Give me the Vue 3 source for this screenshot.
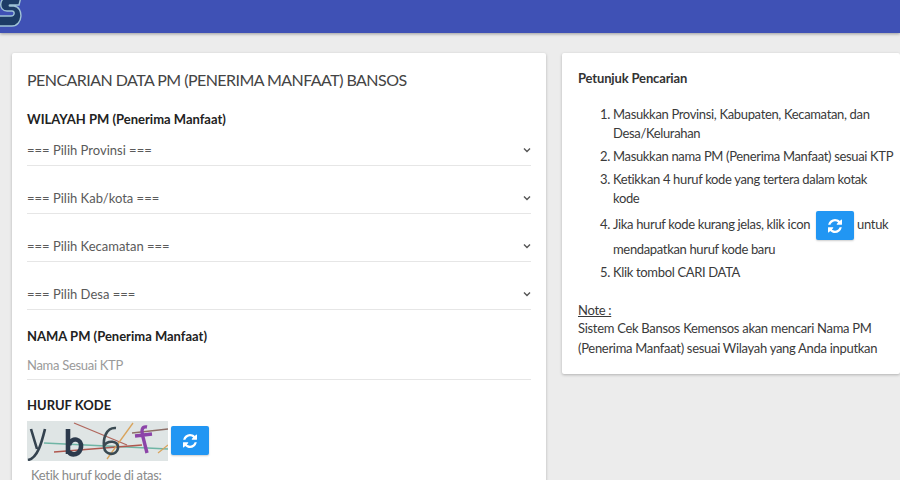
<script setup>
const selects = ['=== Pilih Provinsi ===', '=== Pilih Kab/kota ===', '=== Pilih Kecamatan ===', '=== Pilih Desa ===']
</script>

<template>
  <div class="page">
    <header class="topbar">
      <svg class="logo" width="22" height="27" viewBox="0 0 22 27">
        <path d="M21 -3 H8 C-1 -3 -2 11 7 11 H12 C15 11 15 16 11 16 H-6 V26 H12 C23 26 24 7 14 6 H10 C9 6 9 5 10 5 H19 Z" fill="#1d3c66" stroke="#9fc3d6" stroke-width="1.4" />
      </svg>
    </header>
    <main class="content">
      <section class="card form-card">
        <h1 class="title">PENCARIAN DATA PM (PENERIMA MANFAAT) BANSOS</h1>
        <h2 class="label first">WILAYAH PM (Penerima Manfaat)</h2>
        <div v-for="s in selects" :key="s" class="select">
          <span>{{ s }}</span>
          <svg width="8" height="6" viewBox="0 0 8 6"><path d="M1 1.5 L4 4.5 L7 1.5" fill="none" stroke="#555" stroke-width="1.4" /></svg>
        </div>
        <h2 class="label name">NAMA PM (Penerima Manfaat)</h2>
        <div class="input">Nama Sesuai KTP</div>
        <h2 class="label code">HURUF KODE</h2>
        <div class="captcha-row">
          <div class="captcha">
            <svg width="141" height="40" viewBox="0 0 141 40">
              <rect width="141" height="40" fill="#dfe5e5" />
              <path d="M17 22 L141 28" stroke="#6fb5a5" stroke-width="1.3" fill="none" />
              <path d="M47 2 L100 24" stroke="#b0665c" stroke-width="1.3" fill="none" />
              <path d="M27 31 L115 24" stroke="#b0574e" stroke-width="1.3" fill="none" />
              <path d="M106 2 L80 38" stroke="#d9a45c" stroke-width="1.3" fill="none" />
              <path d="M105 12 L141 8" stroke="#8d6f68" stroke-width="1.3" fill="none" />
              <path d="M131 32 L141 24" stroke="#d9a45c" stroke-width="1.3" fill="none" />
              <path d="M4 8 L10 28 M18 8 C15 20 11 37 1 39" stroke="#34424f" stroke-width="2.6" fill="none" />
              <path d="M41 8 V33 M42 24 C45 15 55 18 54 26 C53 34 45 35 42 31" stroke="#2c3a4c" stroke-width="4.6" fill="none" />
              <path d="M89 7 C79 6 76 18 77 26 C78 35 90 35 91 27 C92 19 80 19 77 25" stroke="#3a4a52" stroke-width="2.6" fill="none" />
              <path d="M120 6 C115 5 114 9 116 16 L120 32 M108 15 L125 13" stroke="#8c44a8" stroke-width="3.4" fill="none" />
            </svg>
          </div>
          <span class="btn">
            <svg width="14" height="14" viewBox="0 0 1536 1536"><path fill="#fff" d="M1511 928q0 5-1 7-64 268-268 434.500T764 1536q-146 0-282.500-55T238 1324l-129 129q-19 19-45 19t-45-19-19-45V960q0-26 19-45t45-19h448q26 0 45 19t19 45-19 45l-137 137q71 66 161 102t187 36q134 0 250-65t186-179q11-17 53-117 8-23 30-23h192q13 0 22.500 9.500t9.500 22.500zm25-800v448q0 26-19 45t-45 19h-448q-26 0-45-19t-19-45 19-45l138-138q-148-137-349-137-134 0-250 65T332 500q-11 17-53 117-8 23-30 23H50q-13 0-22.500-9.500T18 608v-7q65-268 270-434.500T768 0q146 0 284 55.500T1297 212l130-129q19-19 45-19t45 19 19 45z"/></svg>
          </span>
        </div>
        <div class="hint">Ketik huruf kode di atas:</div>
      </section>
      <aside class="card help-card">
        <h3 class="help-title">Petunjuk Pencarian</h3>
        <ol class="steps">
          <li>Masukkan Provinsi, Kabupaten, Kecamatan, dan Desa/Kelurahan</li>
          <li>Masukkan nama PM (Penerima Manfaat) sesuai KTP</li>
          <li>Ketikkan 4 huruf kode yang tertera dalam kotak<br>kode</li>
          <li>Jika huruf kode kurang jelas, klik icon <span class="btn inline">
            <svg width="14" height="14" viewBox="0 0 1536 1536"><path fill="#fff" d="M1511 928q0 5-1 7-64 268-268 434.500T764 1536q-146 0-282.500-55T238 1324l-129 129q-19 19-45 19t-45-19-19-45V960q0-26 19-45t45-19h448q26 0 45 19t19 45-19 45l-137 137q71 66 161 102t187 36q134 0 250-65t186-179q11-17 53-117 8-23 30-23h192q13 0 22.500 9.500t9.500 22.500zm25-800v448q0 26-19 45t-45 19h-448q-26 0-45-19t-19-45 19-45l138-138q-148-137-349-137-134 0-250 65T332 500q-11 17-53 117-8 23-30 23H50q-13 0-22.500-9.500T18 608v-7q65-268 270-434.500T768 0q146 0 284 55.500T1297 212l130-129q19-19 45-19t45 19 19 45z"/></svg>
          </span> untuk mendapatkan huruf kode baru</li>
          <li>Klik tombol CARI DATA</li>
        </ol>
        <div class="note-head">Note :</div>
        <p class="note">Sistem Cek Bansos Kemensos akan mencari Nama PM (Penerima Manfaat) sesuai Wilayah yang Anda inputkan</p>
      </aside>
    </main>
  </div>
</template>

<style>
html, body { margin: 0; overflow: hidden; background: #ececec; }
</style>

<style scoped>
.page {
  width: 900px;
  height: 480px;
  overflow: hidden;
  background: #ececec;
  font-family: "Lato", "Open Sans", sans-serif;
  font-size: 13px;
  letter-spacing: -0.3px;
  color: #3a3a3a;
}
.topbar {
  height: 33px;
  background: #3f51b5;
  box-shadow: 0 1px 3px rgba(0,0,0,.35);
  overflow: hidden;
}
.logo { display: block; }
.content {
  display: flex;
  align-items: flex-start;
  gap: 16px;
  padding: 20px 0 0 12px;
}
.card {
  background: #fff;
  border-radius: 2px;
  box-shadow: 0 1px 3px rgba(0,0,0,.25);
  box-sizing: border-box;
}
.form-card {
  width: 534px;
  height: 500px;
  padding: 16px 15px 0;
}
.help-card {
  width: 338px;
  height: 321px;
  padding: 16px 16px 0;
}
.title { margin: 0; font-size: 16px; letter-spacing: -0.55px; line-height: 22px; font-weight: 400; color: #444; }
.label { margin: 0; font-size: 13px; letter-spacing: 0; line-height: 18px; font-weight: 700; color: #222; }
.label.first { margin-top: 19px; }
.select {
  height: 38px;
  box-sizing: border-box;
  border-bottom: 1px solid #e6e6e6;
  display: flex;
  justify-content: space-between;
  align-items: center;
  padding: 7px 0 0;
  margin-bottom: 10px;
  letter-spacing: 0;
  color: #5a5a5a;
}
.label.name { margin-top: 17px; }
.input {
  height: 32px;
  box-sizing: border-box;
  border-bottom: 1px solid #e6e6e6;
  padding-top: 9px;
  margin-top: 3px;
  color: #9a9a9a;
}
.label.code { margin-top: 16px; }
.captcha-row { display: flex; align-items: flex-start; gap: 3px; margin-top: 7px; }
.captcha { width: 141px; height: 40px; }
.captcha svg { display: block; }
.btn {
  display: inline-flex;
  align-items: center;
  justify-content: center;
  width: 38px;
  height: 29px;
  background: #2196f3;
  border-radius: 2px;
  box-shadow: 0 1px 2px rgba(0,0,0,.2);
  margin-top: 5px;
}
.hint { margin: 6px 0 0 4px; color: #8a8a8a; }
.help-title { margin: 0; font-size: 13px; letter-spacing: -0.15px; line-height: 19px; font-weight: 700; color: #333; }
.steps { margin: 17px -16px 0 0; padding: 0 0 0 35px; line-height: 19px; letter-spacing: -0.34px; }
.steps li { margin-bottom: 4px; }
.btn.inline { vertical-align: middle; margin: -1px 0 0 3px; }
.note-head { margin-top: 19px; text-decoration: underline; line-height: 19px; }
.note { margin: -2px 0 0; line-height: 20px; }
</style>
